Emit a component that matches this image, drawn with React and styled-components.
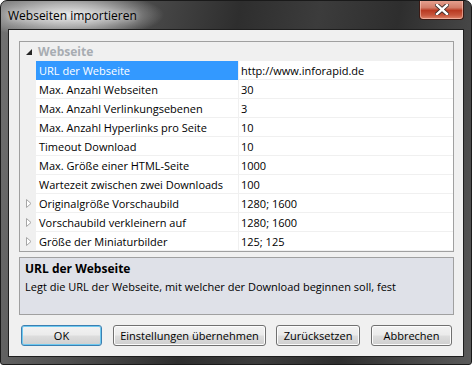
import React from "react";
import styled, { createGlobalStyle } from "styled-components";

const Global = createGlobalStyle`
  html, body { margin: 0; padding: 0; background: #ffffff; }
  body { font-family: "Open Sans", "Noto Sans", sans-serif; font-size: 11px; }
  * { box-sizing: border-box; }
`;

const Window = styled.div`
  width: 472px;
  height: 365px;
  border: 1px solid #1a1a1a;
  border-radius: 7px 7px 3px 3px;
  background:
    radial-gradient(ellipse 95px 24px at 68px 14px, rgba(240,240,240,0.95) 0%, rgba(215,215,215,0.7) 45%, rgba(120,120,120,0) 100%),
    linear-gradient(100deg, #727272 0%, #4e4e4e 25%, #2e2e2e 45%, #3c3c3c 60%, #2e2e2e 75%, #5a5a5a 100%);
  display: flex;
  flex-direction: column;
  overflow: hidden;
`;

const TitleBar = styled.div`
  height: 28px;
  display: flex;
  align-items: flex-start;
  justify-content: space-between;
  padding-left: 7px;
  padding-right: 7px;
`;

const Title = styled.div`
  font-size: 12px;
  color: #000;
  margin-top: 6px;
  text-shadow: 0 0 6px rgba(255,255,255,0.9);
`;

const CloseButton = styled.div`
  width: 45px;
  height: 20px;
  margin-top: -1px;
  border: 1px solid #3b1a14;
  border-top: none;
  border-radius: 0 0 4px 4px;
  background: linear-gradient(#e8a493 0%, #d27d69 40%, #b93a22 55%, #c7563d 80%, #e0866c 100%);
  box-shadow: inset 0 0 0 1px rgba(255,220,210,0.5);
  display: flex;
  align-items: center;
  justify-content: center;
`;

const Client = styled.div`
  margin: 0 7px 7px 7px;
  flex: 1;
  border: 1px solid #1e1e1e;
  background: #f0f0f0;
  padding: 11px 9px 0 10px;
  display: flex;
  flex-direction: column;
`;

const Grid = styled.div`
  width: 435px;
  border: 1px solid #a0a0a0;
  background: #ffffff;
`;

const CategoryRow = styled.div`
  height: 19px;
  background: #f0f0f0;
  display: flex;
  align-items: center;
  font-weight: bold;
  color: #a7acb2;
  font-size: 12px;
`;

const CategoryLabel = styled.span`
  padding-left: 2px;
`;

const Row = styled.div`
  height: 19px;
  display: flex;
  background: #f0f0f0;
`;

const Margin = styled.div`
  width: 16px;
  flex: none;
  display: flex;
  align-items: center;
  justify-content: center;
  padding-left: 1px;
`;

const NameCell = styled.div`
  width: 202px;
  flex: none;
  padding-left: 3px;
  display: flex;
  align-items: center;
  background: ${(p) => (p.$selected ? "#3399ff" : "#ffffff")};
  color: ${(p) => (p.$selected ? "#ffffff" : "#000000")};
  border-bottom: 1px solid ${(p) => (p.$selected ? "#3399ff" : "#f0f0f0")};
  white-space: nowrap;
`;

const ValueCell = styled.div`
  flex: 1;
  padding-left: 2px;
  display: flex;
  align-items: center;
  background: #ffffff;
  border-left: 1px solid #f0f0f0;
  border-bottom: 1px solid #f0f0f0;
  white-space: nowrap;
  color: #000;
`;

const Description = styled.div`
  width: 435px;
  height: 58px;
  margin-top: 5px;
  border: 1px solid #a0a0a0;
  background: #dfe1e8;
  padding: 3px 5px;
  color: #000;
`;

const DescTitle = styled.div`
  font-weight: bold;
  font-size: 12px;
  line-height: 16px;
`;

const DescText = styled.div`
  margin-top: 2px;
  line-height: 15px;
`;

const ButtonRow = styled.div`
  margin-top: 10px;
  display: flex;
  padding-left: 2px;
`;

const Button = styled.div`
  height: 21px;
  width: ${(p) => p.$w}px;
  margin-right: ${(p) => p.$gap || 0}px;
  border: 1px solid ${(p) => (p.$default ? "#3c7fb1" : "#707070")};
  border-radius: 3px;
  background: linear-gradient(#f2f2f2 0%, #ebebeb 48%, #dddddd 52%, #cfcfcf 100%);
  box-shadow: inset 0 0 0 1px ${(p) => (p.$default ? "#6ec9f0" : "#fcfcfc")};
  display: flex;
  align-items: center;
  justify-content: center;
  color: #000;
`;

const ExpandedArrow = () => (
  <svg width="6" height="6" viewBox="0 0 6 6">
    <polygon points="6,0 6,6 0,6" fill="#262626" />
  </svg>
);

const CollapsedArrow = () => (
  <svg width="6" height="9" viewBox="0 0 6 9">
    <polygon points="0.5,0.5 5,4.5 0.5,8.5" fill="#ffffff" stroke="#a6a6a6" strokeWidth="1" />
  </svg>
);

const rows = [
  ["URL der Webseite", "http://www.inforapid.de", false, true],
  ["Max. Anzahl Webseiten", "30"],
  ["Max. Anzahl Verlinkungsebenen", "3"],
  ["Max. Anzahl Hyperlinks pro Seite", "10"],
  ["Timeout Download", "10"],
  ["Max. Größe einer HTML-Seite", "1000"],
  ["Wartezeit zwischen zwei Downloads", "100"],
  ["Originalgröße Vorschaubild", "1280; 1600", true],
  ["Vorschaubild verkleinern auf", "1280; 1600", true],
  ["Größe der Miniaturbilder", "125; 125", true],
];

export default function App() {
  return (
    <>
      <Global />
      <Window>
        <TitleBar>
          <Title>Webseiten importieren</Title>
          <CloseButton>
            <svg width="14" height="11" viewBox="0 0 14 11">
              <path d="M2 1 L12 10 M12 1 L2 10" stroke="#3a2a28" strokeWidth="4.2" strokeLinecap="square" />
              <path d="M2 1 L12 10 M12 1 L2 10" stroke="#ffffff" strokeWidth="2.4" strokeLinecap="square" />
            </svg>
          </CloseButton>
        </TitleBar>
        <Client>
          <Grid>
            <CategoryRow>
              <Margin><ExpandedArrow /></Margin>
              <CategoryLabel>Webseite</CategoryLabel>
            </CategoryRow>
            {rows.map(([name, value, collapsed, selected]) => (
              <Row key={name}>
                <Margin>{collapsed ? <CollapsedArrow /> : null}</Margin>
                <NameCell $selected={selected}>{name}</NameCell>
                <ValueCell>{value}</ValueCell>
              </Row>
            ))}
          </Grid>
          <Description>
            <DescTitle>URL der Webseite</DescTitle>
            <DescText>Legt die URL der Webseite, mit welcher der Download beginnen soll, fest</DescText>
          </Description>
          <ButtonRow>
            <Button $w={81} $gap={11} $default>OK</Button>
            <Button $w={153} $gap={10}>Einstellungen übernehmen</Button>
            <Button $w={84} $gap={11}>Zurücksetzen</Button>
            <Button $w={81}>Abbrechen</Button>
          </ButtonRow>
        </Client>
      </Window>
    </>
  );
}
